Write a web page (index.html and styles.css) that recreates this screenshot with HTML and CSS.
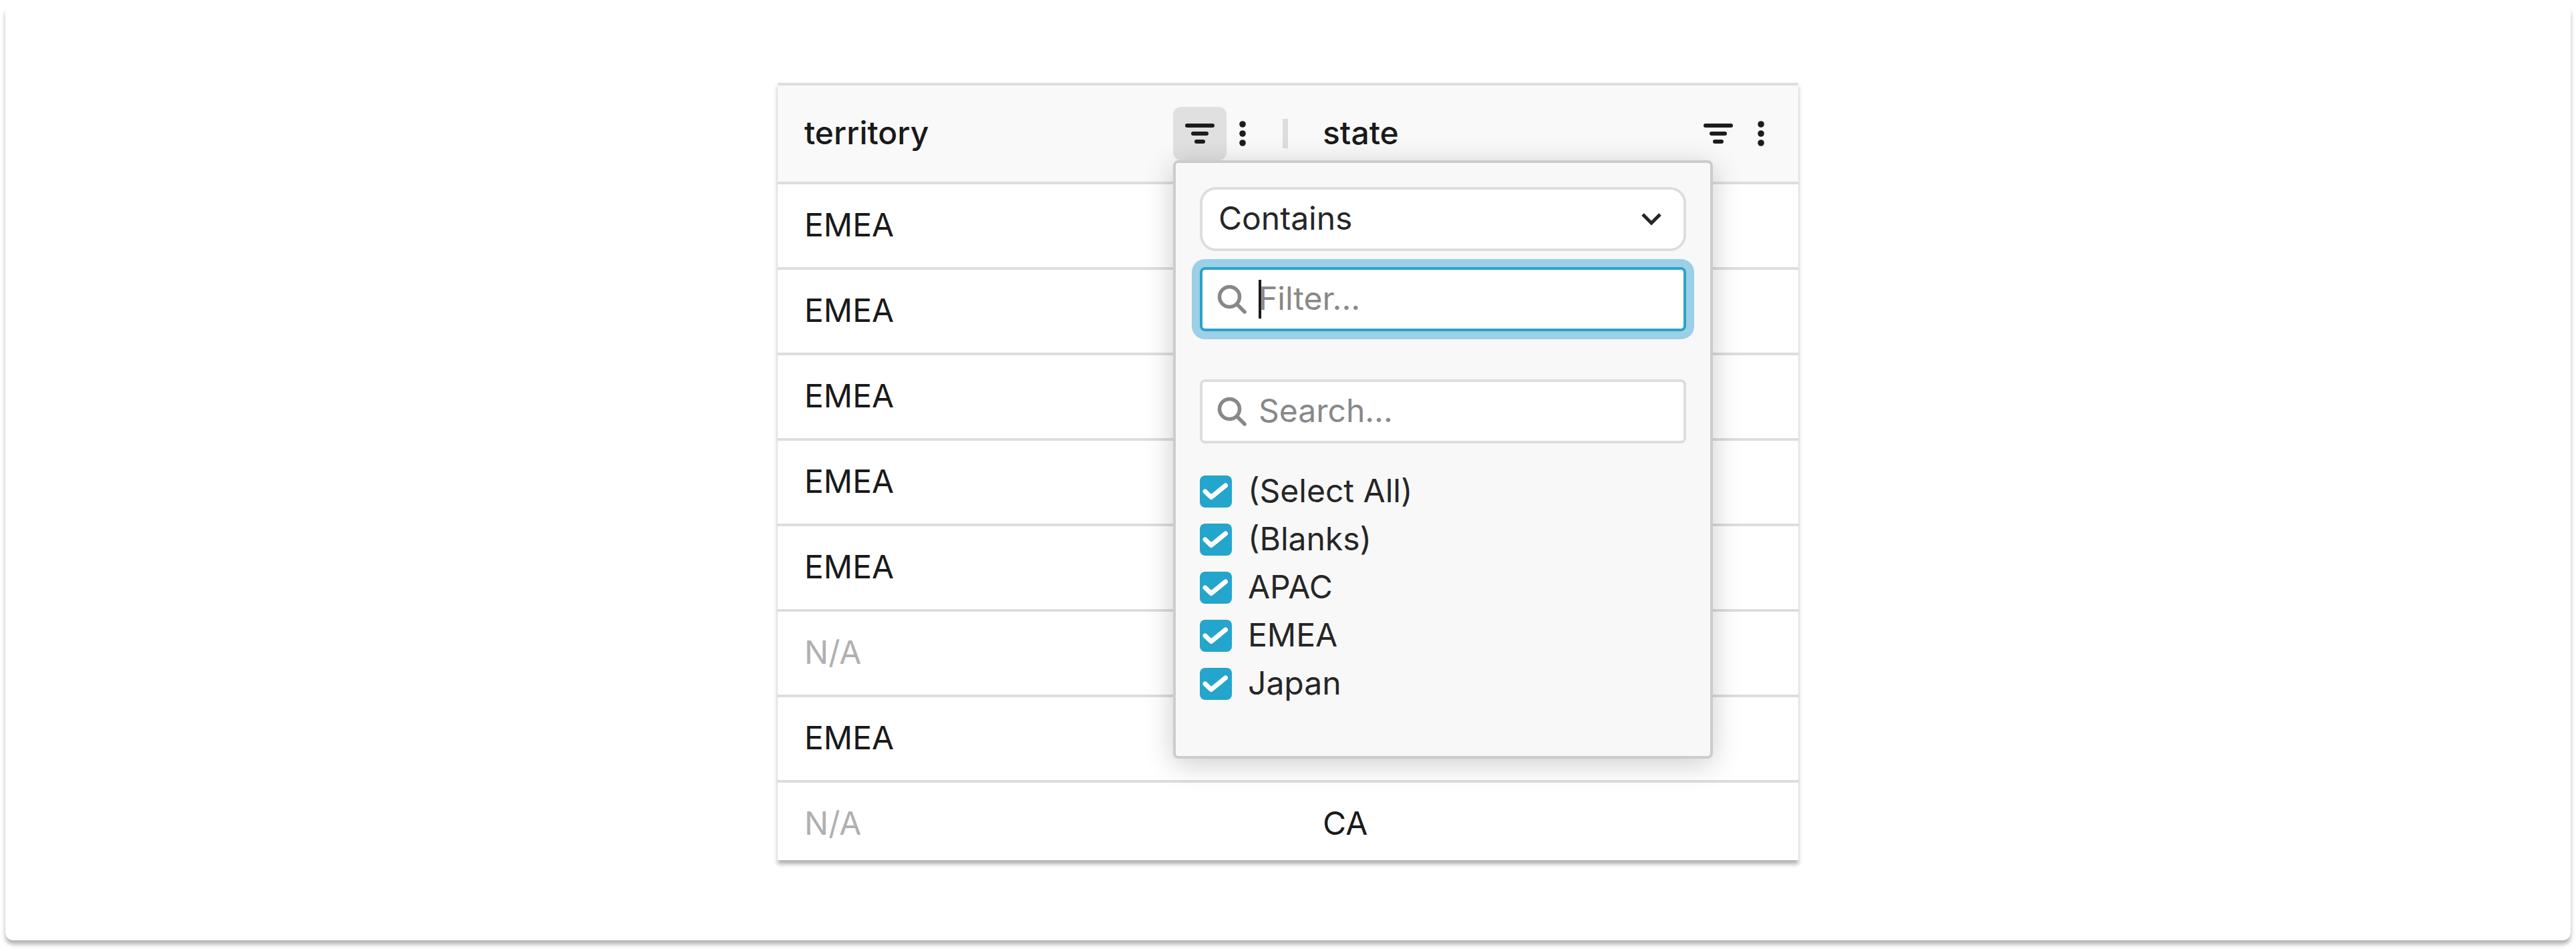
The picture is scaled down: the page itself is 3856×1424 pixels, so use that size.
FILE: index.html
```html
<!DOCTYPE html>
<html lang="en">
<head>
<meta charset="utf-8">
<title>Territory filter</title>
<link rel="stylesheet" href="styles.css">
</head>
<body>
<svg class="sprite" aria-hidden="true">
  <symbol id="i-filter" viewBox="0 0 48 48"><path d="M5 12H43M14 24H34M19 36H29" fill="none" stroke="#1c1c1c" stroke-width="6" stroke-linecap="round"/></symbol>
  <symbol id="i-dots" viewBox="0 0 48 48"><circle cx="24" cy="10" r="4.8" fill="#1c1c1c"/><circle cx="24" cy="24" r="4.8" fill="#1c1c1c"/><circle cx="24" cy="38" r="4.8" fill="#1c1c1c"/></symbol>
  <symbol id="i-search" viewBox="0 0 48 48"><circle cx="20.5" cy="20.5" r="15" fill="none" stroke="#888" stroke-width="5.5"/><path d="M32 32L43 43" fill="none" stroke="#888" stroke-width="5.5" stroke-linecap="round"/></symbol>
  <symbol id="i-check" viewBox="0 0 48 48"><path d="M8 24L17 32.5L38.500 15" fill="none" stroke="#fff" stroke-width="7" stroke-linecap="round" stroke-linejoin="round"/></symbol>
  <symbol id="i-chevron" viewBox="0 0 48 48"><path d="M11 17L24 30L37 17" fill="none" stroke="#262626" stroke-width="5"/></symbol>
</svg>
<main class="card">
  <section class="grid">
    <header class="head">
      <div class="col col-a">
        <span class="title">territory</span>
        <span class="actions">
          <span class="btn btn-active"><svg class="icon"><use href="#i-filter"/></svg></span>
          <span class="dots"><svg class="icon"><use href="#i-dots"/></svg></span>
          <span class="sep"></span>
        </span>
      </div>
      <div class="col col-b">
        <span class="title">state</span>
        <span class="actions actions-end">
          <span class="btn"><svg class="icon"><use href="#i-filter"/></svg></span>
          <span class="dots"><svg class="icon"><use href="#i-dots"/></svg></span>
        </span>
      </div>
    </header>
    <div class="rows">
      <div class="row"><span class="cell-a">EMEA</span><span class="cell-b"></span></div>
      <div class="row"><span class="cell-a">EMEA</span><span class="cell-b"></span></div>
      <div class="row"><span class="cell-a">EMEA</span><span class="cell-b"></span></div>
      <div class="row"><span class="cell-a">EMEA</span><span class="cell-b"></span></div>
      <div class="row"><span class="cell-a">EMEA</span><span class="cell-b"></span></div>
      <div class="row"><span class="cell-a muted">N/A</span><span class="cell-b"></span></div>
      <div class="row"><span class="cell-a">EMEA</span><span class="cell-b"></span></div>
      <div class="row row-last"><span class="cell-a muted">N/A</span><span class="cell-b">CA</span></div>
    </div>
    <aside class="panel">
      <div class="select"><span class="select-label">Contains</span><svg class="icon"><use href="#i-chevron"/></svg></div>
      <div class="field field-focus"><svg class="icon"><use href="#i-search"/></svg><span class="caret"></span><span class="placeholder">Filter...</span></div>
      <div class="field field-search"><svg class="icon"><use href="#i-search"/></svg><span class="placeholder">Search...</span></div>
      <ul class="list">
        <li class="item"><span class="box"><svg class="icon"><use href="#i-check"/></svg></span><span class="label">(Select All)</span></li>
        <li class="item"><span class="box"><svg class="icon"><use href="#i-check"/></svg></span><span class="label">(Blanks)</span></li>
        <li class="item"><span class="box"><svg class="icon"><use href="#i-check"/></svg></span><span class="label">APAC</span></li>
        <li class="item"><span class="box"><svg class="icon"><use href="#i-check"/></svg></span><span class="label">EMEA</span></li>
        <li class="item"><span class="box"><svg class="icon"><use href="#i-check"/></svg></span><span class="label">Japan</span></li>
      </ul>
    </aside>
  </section>
</main>
</body>
</html>
```
FILE: styles.css
```css
* { box-sizing: border-box; }
html { background: #fff; }
body {
  margin: 0;
  height: 1424px;
  padding: 8px;
  background: #fff;
  font-family: Inter, "Liberation Sans", sans-serif;
  color: #1a1a1a;
}
.sprite { position: absolute; width: 0; height: 0; overflow: hidden; }
.icon { display: block; width: 48px; height: 48px; flex: none; }

.card {
  display: flex;
  justify-content: center;
  height: 1400px;
  padding-top: 116px;
  background: #fff;
  border-radius: 12px;
  box-shadow: 0 6px 6px rgba(0, 0, 0, .3);
}

.grid {
  position: relative;
  width: 1528px;
  height: 1164px;
  background: #fff;
  box-shadow: 0 6px 6px rgba(0, 0, 0, .3);
  font-size: 48px;
}

.head {
  display: flex;
  height: 152px;
  background: #f9f9f9;
  border-top: 4px solid #ddd;
  border-bottom: 4px solid #ddd;
}
.col { display: flex; align-items: center; width: 764px; }
.col-a { padding-left: 40px; }
.col-b { padding-left: 52px; padding-right: 32px; }
.title { font-weight: 450; flex: 1; padding-bottom: 4px; }
.actions { display: flex; align-items: center; }
.btn { display: flex; align-items: center; justify-content: center; width: 80px; height: 80px; border-radius: 12px; }
.btn-active { background: #e0e0e0; }
.dots { display: block; width: 48px; }
.sep { width: 8px; height: 44px; margin-left: 36px; background: #ddd; }

.rows { height: 1012px; overflow: hidden; }
.row { display: flex; align-items: center; height: 128px; border-bottom: 4px solid #ddd; }
.row-last { border-bottom: 0; height: 124px; }
.cell-a { width: 764px; padding-left: 40px; padding-bottom: 4px; }
.cell-b { width: 764px; padding-left: 52px; padding-bottom: 4px; }
.muted { color: #b0b0b0; }

.panel {
  position: absolute;
  left: 592px;
  top: 116px;
  width: 808px;
  height: 896px;
  padding: 36px 36px 0;
  background: #f8f8f8;
  border: 4px solid #ccc;
  border-radius: 8px;
  box-shadow: 0 8px 44px rgba(0, 0, 0, .2);
  display: flex;
  flex-direction: column;
  font-size: 48px;
  color: #262626;
}
.select {
  display: flex;
  align-items: center;
  justify-content: space-between;
  height: 96px;
  padding: 0 24px;
  background: #fff;
  border: 4px solid #ddd;
  border-radius: 24px;
}
.select-label { padding-bottom: 4px; }
.field {
  display: flex;
  align-items: center;
  height: 96px;
  padding-left: 20px;
  background: #fff;
  border: 4px solid #ddd;
  border-radius: 8px;
}
.field .icon { margin-right: 16px; }
.field-focus {
  margin-top: 24px;
  border-color: #2aa3c6;
  box-shadow: 0 0 0 12px #9bd0e6;
}
.field-search { margin-top: 72px; }
.placeholder { color: #888; padding-bottom: 4px; }
.caret { width: 4px; height: 58px; margin-right: -4px; background: #1a1a1a; }
.list { margin: 36px 0 0; padding: 0; list-style: none; }
.item { display: flex; align-items: center; height: 72px; }
.label { padding-bottom: 4px; }
.box { width: 48px; height: 48px; margin-right: 24px; background: #24a5cc; border-radius: 8px; flex: none; }
```
